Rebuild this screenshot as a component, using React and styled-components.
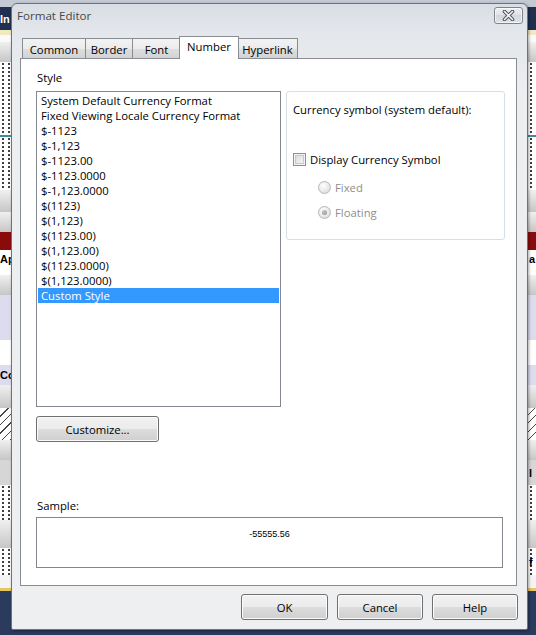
import React from "react";
import styled, { createGlobalStyle, css } from "styled-components";

const GlobalStyle = createGlobalStyle`
  html, body { margin: 0; padding: 0; }
  body {
    width: 536px;
    height: 635px;
    overflow: hidden;
    font-family: "Open Sans", "Noto Sans", sans-serif;
    font-size: 11.3px;
    color: #000;
  }
  * { box-sizing: border-box; }
`;

/* ---------- application behind the dialog ---------- */

const Desktop = styled.div`
  position: relative;
  width: 536px;
  height: 635px;
  overflow: hidden;
  display: flex;
  flex-direction: column;
  background: #fff;
`;

const bandKinds = {
  plain: css`background: ${(p) => p.$bg};`,
  grad: css`background: linear-gradient(#f0f0f0, #c6c6c6);`,
  dotted: css`
    background-color: #fff;
    background-image: radial-gradient(circle, #3a3a3a 0.7px, transparent 0.9px);
    background-size: 6px 4px;
    background-position: 0 0;
  `,
  hatched: css`
    background: repeating-linear-gradient(-45deg, #fff 0 5px, #444 5px 6px);
  `,
};

const Band = styled.div`
  flex: none;
  height: ${(p) => p.$h}px;
  display: grid;
  grid-template-columns: 529px 7px;
  align-items: center;
  font: bold 11px "Liberation Sans", sans-serif;
  color: ${(p) => p.$fg || "#000"};
  ${(p) => bandKinds[p.$kind || "plain"]}
`;

const BandText = styled.span`
  white-space: nowrap;
  overflow: hidden;
`;

const bands = [
  { h: 7, bg: "#c3cad3" },
  { h: 23, bg: "#1f3050", fg: "#fff", l: "In", r: "" },
  { h: 5, bg: "#f2e8c2" },
  { h: 7, bg: "#fafafa" },
  { h: 20, kind: "grad" },
  { h: 73, kind: "dotted" },
  { h: 2, bg: "#3c8c9c" },
  { h: 53, kind: "dotted" },
  { h: 22, kind: "grad" },
  { h: 20, kind: "grad" },
  { h: 18, bg: "#8a0b0b" },
  { h: 18, bg: "#fff", l: "Ap", r: "a" },
  { h: 7, bg: "#fff" },
  { h: 20, kind: "grad" },
  { h: 45, bg: "#dcdcee" },
  { h: 25, bg: "#fff" },
  { h: 20, bg: "#dcdcee", l: "Cc" },
  { h: 23, kind: "grad" },
  { h: 32, kind: "hatched" },
  { h: 20, kind: "grad" },
  { h: 25, bg: "#d6d6d6", r: "l" },
  { h: 35, kind: "dotted" },
  { h: 28, kind: "grad" },
  { h: 27, kind: "dotted", r: "f" },
  { h: 13, bg: "#f4f4f4" },
  { h: 3, bg: "#e8c660" },
  { h: 44, bg: "#2a3b5e" },
];

/* ---------- dialog window ---------- */

const Window = styled.div`
  position: absolute;
  left: 11px;
  top: 3px;
  width: 517px;
  height: 627px;
  border: 1px solid #6b737d;
  border-radius: 6px 6px 2px 2px;
  background: linear-gradient(#d9dee4, #e4e7eb 30px, #eceef0 90px, #eeeff1);
  box-shadow: 1px 1px 3px rgba(0, 0, 0, 0.35);
  display: flex;
  flex-direction: column;
`;

const TitleBar = styled.div`
  flex: none;
  height: 29px;
  display: flex;
  align-items: flex-start;
  justify-content: space-between;
  padding: 3px 4px 0 5px;
`;

const Title = styled.div`
  margin-top: 1px;
  line-height: 15px;
  font-size: 11.6px;
  color: #474747;
`;

const CloseButton = styled.div`
  width: 29px;
  height: 17px;
  border: 1px solid #7d848c;
  border-radius: 3px;
  background: linear-gradient(#eef0f3, #dde1e6 50%, #d3d8de 50%, #dfe3e8);
  box-shadow: inset 0 0 0 1px rgba(255, 255, 255, 0.6);
  display: flex;
  align-items: center;
  justify-content: center;
`;

const Body = styled.div`
  flex: 1;
  display: flex;
  flex-direction: column;
  padding: 0 10px 0 8px;
`;

const TabStrip = styled.div`
  flex: none;
  margin-top: 3px;
  height: 22px;
  padding-left: 2px;
  display: flex;
  align-items: flex-end;
`;

const Tab = styled.div`
  position: relative;
  width: ${(p) => p.$w}px;
  margin-left: ${(p) => p.$ml || 0}px;
  height: 20px;
  border: 1px solid #898c95;
  border-bottom: none;
  background: linear-gradient(#f3f3f3, #ebebeb 50%, #dedede 50%, #d3d3d3);
  display: flex;
  align-items: center;
  justify-content: center;
  line-height: 15px;
  padding-top: 1px;
  ${(p) =>
    p.$active &&
    css`
      z-index: 2;
      height: 23px;
      margin-bottom: -1px;
      background: #fff;
      padding-top: 0;
      padding-bottom: 3px;
    `}
`;

const Panel = styled.div`
  flex: none;
  height: 528px;
  border: 1px solid #898c95;
  background: #fff;
  display: flex;
  flex-direction: column;
  padding: 11px 11px 0 15px;
`;

const TopArea = styled.div`
  display: flex;
  gap: 5px;
`;

const StyleColumn = styled.div`
  width: 245px;
  display: flex;
  flex-direction: column;
`;

const Label = styled.div`
  line-height: 15px;
  margin-left: 1px;
  margin-bottom: ${(p) => p.$mb || 0}px;
`;

const ListBox = styled.div`
  height: 316px;
  border: 1px solid #828790;
  padding: 1px;
  background: #fff;
`;

const ListItem = styled.div`
  height: 15px;
  line-height: 15px;
  padding-left: 3px;
  white-space: nowrap;
  ${(p) =>
    p.$selected &&
    css`
      background: #3399ff;
      color: #fff;
    `}
`;

const PushButton = styled.div`
  width: ${(p) => p.$w}px;
  height: 26px;
  border: 1px solid #707070;
  border-radius: 3px;
  background: linear-gradient(#f2f2f2, #ebebeb 50%, #dddddd 50%, #cfcfcf);
  box-shadow: inset 0 0 0 1px #fbfbfb;
  display: flex;
  align-items: center;
  justify-content: center;
  line-height: 15px;
  margin-top: ${(p) => p.$mt || 0}px;
`;

const GroupBox = styled.div`
  flex: 1;
  height: 149px;
  margin-top: 21px;
  border: 1px solid #d5dfe5;
  border-radius: 3px;
  padding: 10px 6px 0 6px;
  display: flex;
  flex-direction: column;
`;

const Line = styled.div`
  height: 15px;
  line-height: 15px;
  display: flex;
  align-items: center;
  gap: 4px;
  margin-top: ${(p) => p.$mt || 0}px;
  padding-left: ${(p) => p.$indent || 0}px;
  color: ${(p) => (p.$disabled ? "#8d8d8d" : "#000")};
`;

const CheckBox = styled.span`
  width: 13px;
  height: 13px;
  flex: none;
  border: 1px solid #8e8f8f;
  box-shadow: inset 0 0 0 1px #f4f4f4, inset 0 0 0 2px #c9c9c9;
  background: linear-gradient(135deg, #d6d6d6, #fbfbfb);
`;

const Radio = styled.span`
  width: 13px;
  height: 13px;
  flex: none;
  border-radius: 50%;
  border: 1px solid #b8b8b8;
  background: radial-gradient(circle at 40% 35%, #ffffff, #e6e6e6 60%, #d6d6d6);
  display: flex;
  align-items: center;
  justify-content: center;
  &::after {
    content: "";
    width: 5px;
    height: 5px;
    border-radius: 50%;
    background: ${(p) => (p.$checked ? "radial-gradient(circle at 40% 35%, #c4c4c4, #8f8f8f)" : "transparent")};
  }
`;

const Spacer = styled.div`
  flex: 1;
`;

const SampleSection = styled.div`
  display: flex;
  flex-direction: column;
  padding: 0 2px 17px 0;
`;

const SampleBox = styled.div`
  height: 51px;
  border: 1px solid #828790;
  margin-top: 4px;
  padding-top: 10px;
  text-align: center;
  font: 9px/12px "Liberation Sans", sans-serif;
`;

const ButtonRow = styled.div`
  display: flex;
  justify-content: flex-end;
  gap: 9px;
  margin-top: 8px;
  margin-right: -1px;
`;

const formats = [
  "System Default Currency Format",
  "Fixed Viewing Locale Currency Format",
  "$-1123",
  "$-1,123",
  "$-1123.00",
  "$-1123.0000",
  "$-1,123.0000",
  "$(1123)",
  "$(1,123)",
  "$(1123.00)",
  "$(1,123.00)",
  "$(1123.0000)",
  "$(1,123.0000)",
  "Custom Style",
];

const tabs = [
  { label: "Common", w: 64 },
  { label: "Border", w: 48, ml: -1 },
  { label: "Font", w: 49, ml: -1 },
  { label: "Number", w: 60, ml: -2, active: true },
  { label: "Hyperlink", w: 61, ml: -2 },
];

function CloseGlyph() {
  return (
    <svg width="13" height="11" viewBox="0 0 13 11">
      <path d="M2.5 1.5 L10.5 9.5 M10.5 1.5 L2.5 9.5" stroke="#4d5258" strokeWidth="3.6" strokeLinecap="round" />
      <path d="M2.5 1.5 L10.5 9.5 M10.5 1.5 L2.5 9.5" stroke="#f4f5f7" strokeWidth="1.6" strokeLinecap="round" />
    </svg>
  );
}

export default function App() {
  return (
    <>
      <GlobalStyle />
      <Desktop>
        {bands.map((b, i) => (
          <Band key={i} $h={b.h} $bg={b.bg} $fg={b.fg} $kind={b.kind}>
            <BandText>{b.l || ""}</BandText>
            <BandText>{b.r || ""}</BandText>
          </Band>
        ))}

        <Window>
          <TitleBar>
            <Title>Format Editor</Title>
            <CloseButton>
              <CloseGlyph />
            </CloseButton>
          </TitleBar>

          <Body>
            <TabStrip>
              {tabs.map((t) => (
                <Tab key={t.label} $w={t.w} $ml={t.ml} $active={t.active}>
                  {t.label}
                </Tab>
              ))}
            </TabStrip>

            <Panel>
              <TopArea>
                <StyleColumn>
                  <Label $mb={6}>Style</Label>
                  <ListBox>
                    {formats.map((f) => (
                      <ListItem key={f} $selected={f === "Custom Style"}>
                        {f}
                      </ListItem>
                    ))}
                  </ListBox>
                  <PushButton $w={123} $mt={9}>Customize...</PushButton>
                </StyleColumn>

                <GroupBox>
                  <Line>Currency symbol (system default):</Line>
                  <Line $mt={35}>
                    <CheckBox />
                    Display Currency Symbol
                  </Line>
                  <Line $mt={13} $indent={25} $disabled>
                    <Radio />
                    Fixed
                  </Line>
                  <Line $mt={10} $indent={25} $disabled>
                    <Radio $checked />
                    Floating
                  </Line>
                </GroupBox>
              </TopArea>

              <Spacer />

              <SampleSection>
                <Label>Sample:</Label>
                <SampleBox>-55555.56</SampleBox>
              </SampleSection>
            </Panel>

            <ButtonRow>
              <PushButton $w={87}>OK</PushButton>
              <PushButton $w={86}>Cancel</PushButton>
              <PushButton $w={86}>Help</PushButton>
            </ButtonRow>
          </Body>
        </Window>
      </Desktop>
    </>
  );
}
